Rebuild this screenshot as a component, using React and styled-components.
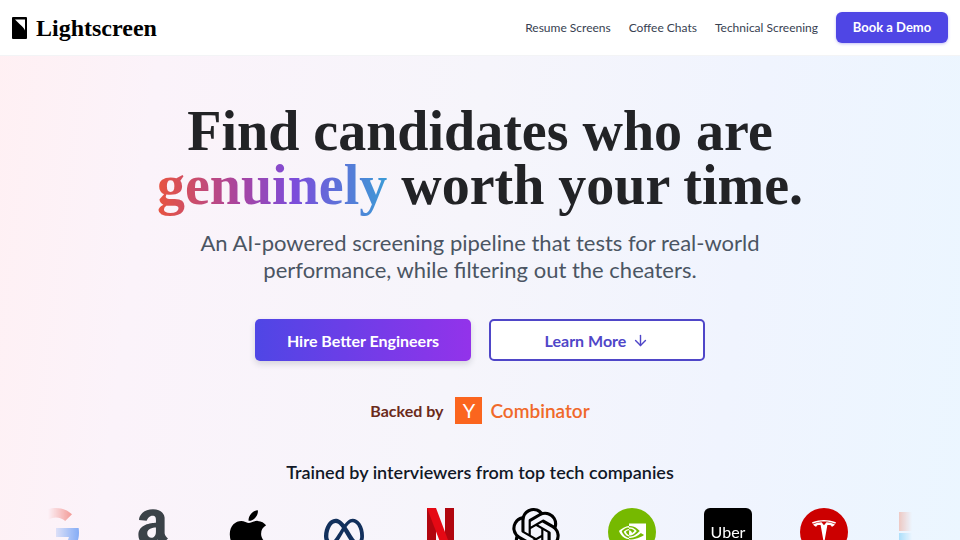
import React from 'react';
import styled, { createGlobalStyle } from 'styled-components';
import { FaAmazon, FaApple } from 'react-icons/fa';
import { SiMeta, SiNvidia, SiOpenai, SiTesla } from 'react-icons/si';
import { ArrowDown } from 'lucide-react';

const GlobalStyle = createGlobalStyle`
  * {
    box-sizing: border-box;
  }

  html {
    scrollbar-width: none;
  }

  body {
    margin: 0;
    font-family: Lato, 'Liberation Sans', sans-serif;
    color: #111827;
  }

  h1, h2, p {
    margin: 0;
  }

  a {
    text-decoration: none;
  }
`;

const Page = styled.div`
  min-height: 100vh;
  background: linear-gradient(97deg, #fff0f3 0%, #fbf3fa 16%, #f6f5fb 48%, #f0f4fe 75%, #ebf6ff 100%);
`;

const Header = styled.header`
  display: flex;
  align-items: center;
  justify-content: space-between;
  padding: 12px;
  background: white;
  border-bottom: 1px solid #f3f4f6;
`;

const Brand = styled.a`
  display: flex;
  align-items: center;
  gap: 9px;
  font-family: 'Liberation Serif', serif;
  font-size: 24px;
  line-height: 28px;
  font-weight: 700;
  color: black;
`;

const Nav = styled.nav`
  display: flex;
  align-items: center;
  gap: 18px;
`;

const NavLink = styled.a`
  font-size: 12px;
  line-height: 16px;
  color: #374151;
`;

const DemoButton = styled.button`
  width: 112px;
  padding: 7px 0 8px;
  border: 0;
  border-radius: 6px;
  background: #4f46e5;
  box-shadow: 0 1px 3px rgba(79, 70, 229, 0.35);
  font-family: inherit;
  font-size: 13px;
  line-height: 16px;
  font-weight: 700;
  color: white;
`;

const Hero = styled.main`
  display: flex;
  flex-direction: column;
  align-items: center;
  padding: 48px 48px 36px;
  text-align: center;
`;

const Title = styled.h1`
  font-family: 'Liberation Serif', serif;
  font-size: 56px;
  line-height: 54px;
  font-weight: 700;
  color: #222326;
`;

const Genuinely = styled.span`
  background: linear-gradient(to right, #e8543f, #a9449f 35%, #7c4ddb 60%, #3b9bd6);
  background-clip: text;
  -webkit-background-clip: text;
  color: transparent;
`;

const Subtitle = styled.p`
  max-width: 600px;
  margin-top: 17px;
  font-size: 22px;
  line-height: 27px;
  color: #4b5563;
`;

const Actions = styled.div`
  display: flex;
  gap: 18px;
  margin-top: 36px;
`;

const ActionButton = styled.button`
  display: flex;
  align-items: center;
  justify-content: center;
  gap: 6px;
  width: 216px;
  height: 42px;
  padding: 0;
  border: ${(props) => (props.$outline ? '2px solid #4f46c8' : '0')};
  border-radius: 5px;
  background: ${(props) => (props.$outline ? 'white' : 'linear-gradient(to right, #4f46e5, #9333ea)')};
  box-shadow: ${(props) => (props.$outline ? 'none' : '0 3px 6px rgba(31, 41, 55, 0.16)')};
  font-family: inherit;
  font-size: 16px;
  font-weight: 700;
  color: ${(props) => (props.$outline ? '#4f46c8' : 'white')};
`;

const Backed = styled.div`
  display: flex;
  align-items: center;
  margin-top: 36px;
  font-size: 16px;
  font-weight: 700;
  color: #6b2a1a;
`;

const YcMark = styled.span`
  width: 27px;
  height: 27px;
  margin: 0 8px 0 12px;
  background: #fb651e;
  font-size: 20px;
  line-height: 27px;
  font-weight: 400;
  color: white;
`;

const YcName = styled.span`
  font-size: 19px;
  line-height: 24px;
  font-weight: 600;
  color: #f0692a;
`;

const Trained = styled.h2`
  margin-top: 36px;
  font-size: 18px;
  line-height: 24px;
  font-weight: 600;
`;

const LogoStrip = styled.div`
  width: 100%;
  margin-top: 24px;
  overflow: hidden;
  mask-image: linear-gradient(to right, transparent, black 48px, black calc(100% - 48px), transparent);
`;

const LogoTrack = styled.div`
  display: flex;
  gap: 48px;
  margin-left: -16px;
`;

const Logo = styled.div`
  display: flex;
  flex: 0 0 48px;
  align-items: center;
  justify-content: center;
  min-width: 0;
  height: 48px;
  border-radius: ${(props) => props.$radius || '0'};
  background: ${(props) => props.$fill || 'transparent'};
  font-size: 16px;
  line-height: 20px;
  color: ${(props) => props.$color || 'white'};

  svg {
    flex-shrink: 0;
  }
`;

const navItems = ['Resume Screens', 'Coffee Chats', 'Technical Screening'];

const BrandIcon = () => (
  <svg width="15" height="22" viewBox="0 0 15 22">
    <rect width="15" height="22" rx="1" fill="#000" />
    <path d="M3 2.500h10v11C11.500 9.500 7 7 3 2.500z" fill="#fff" />
  </svg>
);

const GoogleIcon = () => (
  <svg width="48" height="48" viewBox="0 0 48 48">
    <path d="M24 9.500c3.500 0 6.700 1.200 9.200 3.600l6.800-6.800C35.900 2.400 30.500 0 24 0 14.600 0 6.500 5.400 2.600 13.200l8 6.200C12.400 13.700 17.700 9.500 24 9.500z" fill="#ea4335" />
    <path d="M47 24.500c0-1.600-.2-3.100-.4-4.500H24v9h12.900c-.6 3-2.300 5.500-4.800 7.200l7.700 6C44.400 38 47 31.800 47 24.500z" fill="#4285f4" />
    <path d="M10.500 28.600a14.500 14.500 0 0 1 0-9.200l-8-6.200a24 24 0 0 0 0 21.600z" fill="#fbbc05" />
    <path d="M24 48c6.500 0 11.900-2.100 15.900-5.800l-7.700-6c-2.200 1.500-4.900 2.300-8.200 2.300-6.300 0-11.600-4.200-13.500-9.900l-8 6.200C6.500 42.600 14.600 48 24 48z" fill="#34a853" />
  </svg>
);

const NetflixIcon = () => (
  <svg width="27" height="48" viewBox="0 0 27 48">
    <path d="M0 0h9v47l-9 1zM18 0h9v48l-9-1z" fill="#b1060f" />
    <path d="M0 0h9l18 48-9-1z" fill="#e50914" />
  </svg>
);

const MicrosoftIcon = () => (
  <svg width="42" height="42" viewBox="0 0 42 42">
    <path d="M0 1h19v19H0z" fill="#f25022" />
    <path d="M22 1h19v19H22z" fill="#7fba00" />
    <path d="M0 22h19v19H0z" fill="#00a4ef" />
    <path d="M22 22h19v19H22z" fill="#ffb900" />
  </svg>
);

const App = () => {
  return (
    <Page>
      <GlobalStyle />
      <Header>
        <Brand href="#">
          <BrandIcon />
          Lightscreen
        </Brand>
        <Nav>
          {navItems.map((item) => (
            <NavLink key={item} href="#">{item}</NavLink>
          ))}
          <DemoButton>Book a Demo</DemoButton>
        </Nav>
      </Header>

      <Hero>
        <Title>
          Find candidates who are
          <br />
          <Genuinely>genuinely</Genuinely> worth your time.
        </Title>
        <Subtitle>
          An AI-powered screening pipeline that tests for real-world
          performance, while filtering out the cheaters.
        </Subtitle>

        <Actions>
          <ActionButton>Hire Better Engineers</ActionButton>
          <ActionButton $outline>
            Learn More
            <ArrowDown size={17} />
          </ActionButton>
        </Actions>

        <Backed>
          Backed by
          <YcMark>Y</YcMark>
          <YcName>Combinator</YcName>
        </Backed>

        <Trained>Trained by interviewers from top tech companies</Trained>
        <LogoStrip>
          <LogoTrack>
            <Logo><GoogleIcon /></Logo>
            <Logo $color="#3b4248"><FaAmazon size={53} /></Logo>
            <Logo $color="#000"><FaApple size={51} /></Logo>
            <Logo $color="#12305c"><SiMeta size={40} /></Logo>
            <Logo><NetflixIcon /></Logo>
            <Logo $color="#000"><SiOpenai size={48} /></Logo>
            <Logo $fill="#76b900" $radius="50%"><SiNvidia size={27} /></Logo>
            <Logo $fill="#000" $radius="6px">Uber</Logo>
            <Logo $fill="#cc0000" $radius="50%"><SiTesla size={24} /></Logo>
            <Logo><MicrosoftIcon /></Logo>
          </LogoTrack>
        </LogoStrip>
      </Hero>
    </Page>
  );
};

export default App;
